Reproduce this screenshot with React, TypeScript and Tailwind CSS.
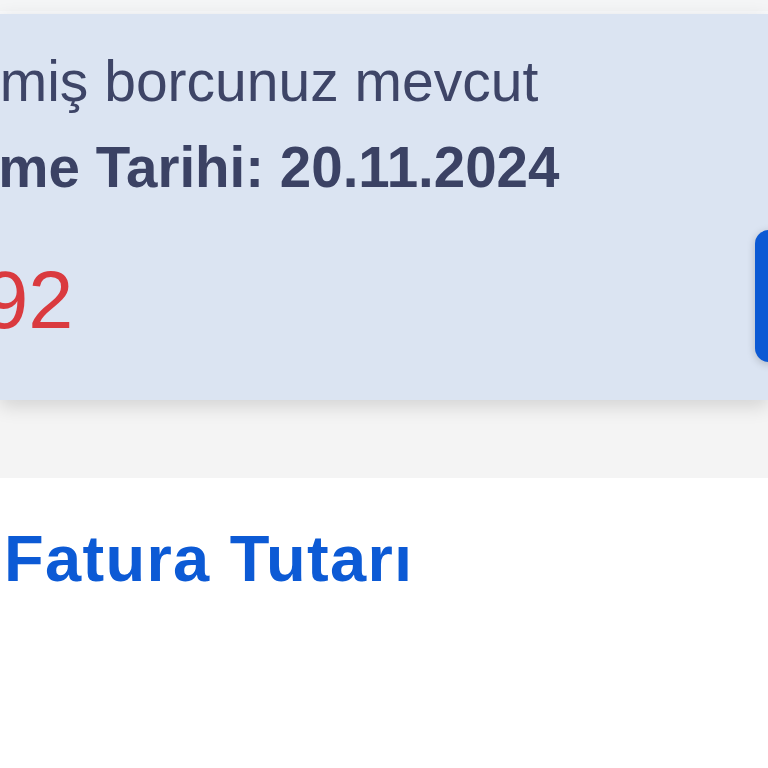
export default function App() {
  const font = { fontFamily: '"Liberation Sans", Arial, sans-serif' };

  return (
    <div className="flex h-[768px] w-[768px] flex-col overflow-hidden bg-white" style={font}>
      <div className="h-[11px] shrink-0 bg-[#f4f5f6]" />
      <div className="h-[3px] shrink-0 bg-[#f8f9fb]" />

      <div className="relative z-10 flex h-[386px] shrink-0 overflow-hidden bg-[#dbe4f2] shadow-[0_6px_18px_rgba(0,0,0,0.14)]">
        <div className="flex min-w-0 flex-1 flex-col">
          <p className="ml-[-146px] mt-[31px] whitespace-nowrap text-[57px] leading-[72px] text-[#3e4567]">
            Gecikmiş borcunuz mevcut
          </p>
          <p className="ml-[-234px] mt-[15px] whitespace-nowrap text-[56.5px] font-bold leading-[72px] text-[#3b4264]">
            Son Ödeme Tarihi: 20.11.2024
          </p>
          <p className="ml-[-242px] mt-[51px] whitespace-nowrap text-[81px] leading-[90px] text-[#da3a3f]">
            1.482,92
          </p>
        </div>
        <div className="mr-[-70px] mt-[216px] h-[132px] w-[83px] shrink-0 rounded-[14px] bg-[#0b59d4] shadow-[0_2px_8px_rgba(0,0,0,0.2)]" />
      </div>

      <div className="h-[78px] shrink-0 bg-[#f4f4f4]" />

      <div className="flex flex-1 flex-col bg-white">
        <h2 className="ml-[4px] mt-[41px] whitespace-nowrap text-[65px] font-bold leading-[80px] tracking-[1.3px] text-[#0c5ad5]">
          Fatura Tutarı
        </h2>
      </div>
    </div>
  );
}
